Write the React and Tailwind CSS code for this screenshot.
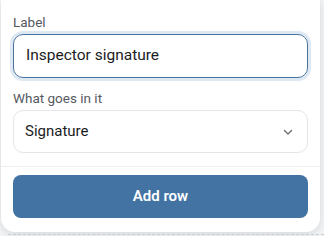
import React from "react";

function Chevron() {
  return (
    <svg width="12" height="12" viewBox="0 0 12 12" fill="none">
      <path d="M2.5 4.5L6 8l3.5-3.5" stroke="#6b6f75" strokeWidth="1.4" strokeLinecap="round" strokeLinejoin="round" />
    </svg>
  );
}

export default function App() {
  return (
    <div
      className="w-[324px] h-[236px] overflow-hidden bg-[#f3f4f5] flex flex-col"
      style={{ fontFamily: "Roboto, Inter, sans-serif" }}
    >
      <div className="ml-[1px] w-[319px] rounded-b-[14px] bg-white shadow-[0_2px_8px_rgba(0,0,0,0.12)] flex flex-col">
        <div className="px-[12px] pt-[13px] flex flex-col">
          <div className="text-[13.5px] leading-[18px] text-[#55595f] mb-[3px]">Label</div>
          <div className="h-[44px] rounded-[10px] border-[1.5px] border-[#4a73a0] ring-[3px] ring-[#dde8f3] flex items-center px-[12px]">
            <span className="text-[15.5px] text-[#1b1c1e]">Inspector signature</span>
          </div>
          <div className="mt-[11px] text-[13.5px] leading-[18px] text-[#55595f] mb-[3px]">What goes in it</div>
          <div className="h-[43px] rounded-[10px] border border-[#e3e5e8] flex items-center justify-between pl-[11px] pr-[13px]">
            <span className="text-[15px] text-[#1b1c1e]">Signature</span>
            <Chevron />
          </div>
        </div>
        <div className="mt-[13px] border-t border-[#eceef0]" />
        <div className="px-[12px] pt-[8px] pb-[14px] flex">
          <button className="w-full h-[43px] rounded-[8px] bg-[#4273a3] text-white text-[15px] font-semibold">
            Add row
          </button>
        </div>
      </div>
      <div className="mt-[2px] ml-[8px] border-t border-dashed border-[#c9cdd3]" />
    </div>
  );
}
